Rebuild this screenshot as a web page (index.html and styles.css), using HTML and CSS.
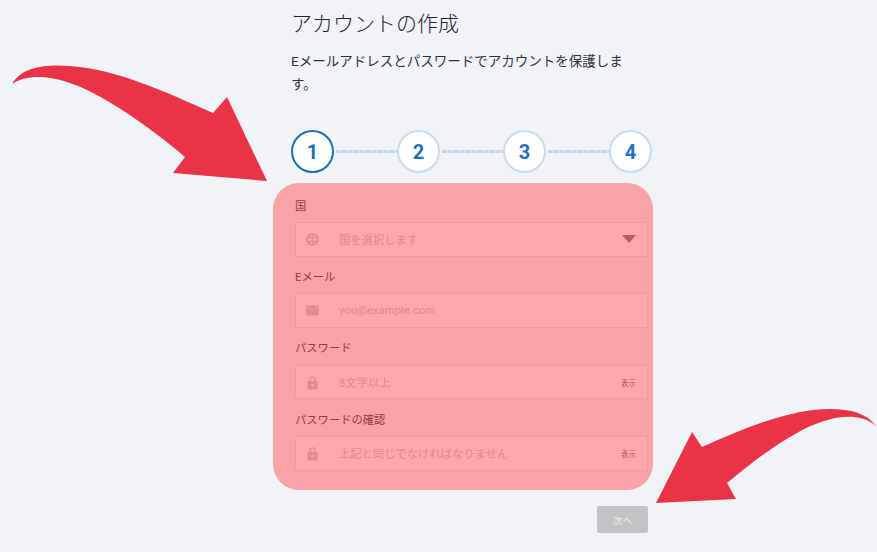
FILE: index.html
```html
<!DOCTYPE html>
<html lang="ja">
<head>
<meta charset="utf-8">
<title>アカウントの作成</title>
<link rel="stylesheet" href="styles.css">
</head>
<body>
<main class="page">
  <h1 class="title">アカウントの作成</h1>
  <p class="lead">Eメールアドレスとパスワードでアカウントを保護します。</p>
  <ol class="stepper">
    <li class="step step-active">1</li>
    <li class="link"></li>
    <li class="step">2</li>
    <li class="link"></li>
    <li class="step">3</li>
    <li class="link"></li>
    <li class="step">4</li>
  </ol>
  <form class="form">
    <div class="group">
      <div class="label">国</div>
      <div class="field">
        <svg class="icon" viewBox="0 0 24 24"><path d="M12 2a10 10 0 1 0 0 20 10 10 0 0 0 0-20zm-1 2.600V8H7.200A8 8 0 0 1 11 4.600zM13 4.600A8 8 0 0 1 16.800 8H13V4.600zM5.300 10H11v4H5.300a8 8 0 0 1 0-4zm7.700 0h5.700a8 8 0 0 1 0 4H13v-4zM7.200 16H11v3.400A8 8 0 0 1 7.200 16zm5.800 0h3.800A8 8 0 0 1 13 19.400V16z"/></svg>
        <span class="placeholder">国を選択します</span>
        <svg class="caret" viewBox="0 0 14 8"><path d="M0 0h14L7 8z"/></svg>
      </div>
    </div>
    <div class="group">
      <div class="label">Eメール</div>
      <div class="field">
        <svg class="icon" viewBox="0 0 24 24"><path d="M3 4h18a1 1 0 0 1 1 1v14a1 1 0 0 1-1 1H3a1 1 0 0 1-1-1V5a1 1 0 0 1 1-1zm9 8.500L21 7V6l-9 5-9-5v1z"/></svg>
        <span class="placeholder">you@example.com</span>
      </div>
    </div>
    <div class="group">
      <div class="label">パスワード</div>
      <div class="field">
        <svg class="icon" viewBox="0 0 24 24"><path d="M18 9h-1V7a5 5 0 0 0-10 0v2H6a2 2 0 0 0-2 2v10a2 2 0 0 0 2 2h12a2 2 0 0 0 2-2V11a2 2 0 0 0-2-2zM9 7a3 3 0 0 1 6 0v2H9V7zm3 11a2 2 0 1 1 0-4 2 2 0 0 1 0 4z"/></svg>
        <span class="placeholder">8文字以上</span>
        <span class="toggle">表示</span>
      </div>
    </div>
    <div class="group">
      <div class="label">パスワードの確認</div>
      <div class="field">
        <svg class="icon" viewBox="0 0 24 24"><path d="M18 9h-1V7a5 5 0 0 0-10 0v2H6a2 2 0 0 0-2 2v10a2 2 0 0 0 2 2h12a2 2 0 0 0 2-2V11a2 2 0 0 0-2-2zM9 7a3 3 0 0 1 6 0v2H9V7zm3 11a2 2 0 1 1 0-4 2 2 0 0 1 0 4z"/></svg>
        <span class="placeholder">上記と同じでなければなりません</span>
        <span class="toggle">表示</span>
      </div>
    </div>
    <div class="highlight"></div>
  </form>
  <div class="actions"><button class="next" type="button">次へ</button></div>
</main>
<svg class="arrows" viewBox="0 0 877 552">
  <path d="M12 84C22 66 48 64 70 66C120 70 165 92 213 113L227 97L267 181L173 173L185 157C150 127 100 92 67 82C45 75 25 75 12 84Z"/>
  <path d="M876 426C865 410 840 407 813 410C775 415 740 430 702 447L692 432L656 503L736 499L727 483C755 460 775 445 797 433C820 420 855 408 876 426Z"/>
</svg>
</body>
</html>
```
FILE: styles.css
```css
* { box-sizing: border-box; }
html, body { margin: 0; height: 552px; overflow: hidden; }
body {
  position: relative;
  background: #f2f3f7;
  color: #1f2a37;
  font-family: "Roboto", "Noto Sans CJK JP", sans-serif;
}
.page { width: 361px; margin-left: 291px; padding-top: 10px; }
.title {
  margin: 0;
  font-size: 21px;
  font-weight: 300;
  line-height: 28px;
  color: #1d242b;
}
.lead {
  width: 340px;
  margin: 12px 0 0;
  font-size: 13.5px;
  line-height: 23px;
  font-weight: 400;
  color: #2a333c;
}
.stepper {
  display: flex;
  align-items: center;
  list-style: none;
  margin: 34px 0 0;
  padding: 0;
}
.step {
  flex: 0 0 43px;
  height: 43px;
  display: flex;
  align-items: center;
  justify-content: center;
  border: 2.5px solid #c6dbeb;
  border-radius: 50%;
  background: #fff;
  color: #1f6fc6;
  font-size: 20px;
  font-weight: 700;
}
.step-active { border-color: #1c6fbe; }
.link { flex: 1; height: 3px; margin: 0 0 0 2px; background: repeating-linear-gradient(90deg, #bcd8ea 0 4px, #d5e4ef 4px 6px); }
.form { position: relative; width: 353px; margin: 21px 0 0 4px; height: 312px; }
.group { height: 71.4px; }
.label { height: 28px; padding-top: 4.5px; font-size: 11.3px; font-weight: 400; line-height: 16px; color: #20262c; }
.field {
  display: flex;
  align-items: center;
  height: 34.5px;
  padding: 0 11px 0 9px;
  border: 1px solid #e0e2e8;
  background: #fff;
}
.icon { width: 15px; height: 15px; fill: #c0c3c9; flex: none; }
.placeholder { flex: 1; margin-left: 19px; padding-bottom: 1px; font-size: 11.3px; font-weight: 400; color: #bcc0c6; white-space: nowrap; }
.caret { width: 14px; height: 8px; fill: #6e6a6c; flex: none; }
.toggle { font-size: 7.5px; color: #5a5f66; }
.highlight {
  position: absolute;
  left: -22px;
  top: -11px;
  width: 380px;
  height: 307px;
  border-radius: 26px;
  background: rgba(255, 81, 90, 0.5);
}
.actions { display: flex; justify-content: flex-end; width: 357px; }
.next {
  width: 51px;
  height: 27px;
  padding: 0;
  border: 0;
  border-radius: 2px;
  background: #c2c3c5;
  color: #f1f1f1;
  font-family: inherit;
  font-size: 9.5px;
}
.arrows { position: absolute; left: 0; top: 0; width: 877px; height: 552px; fill: #ea3347; pointer-events: none; }
```
